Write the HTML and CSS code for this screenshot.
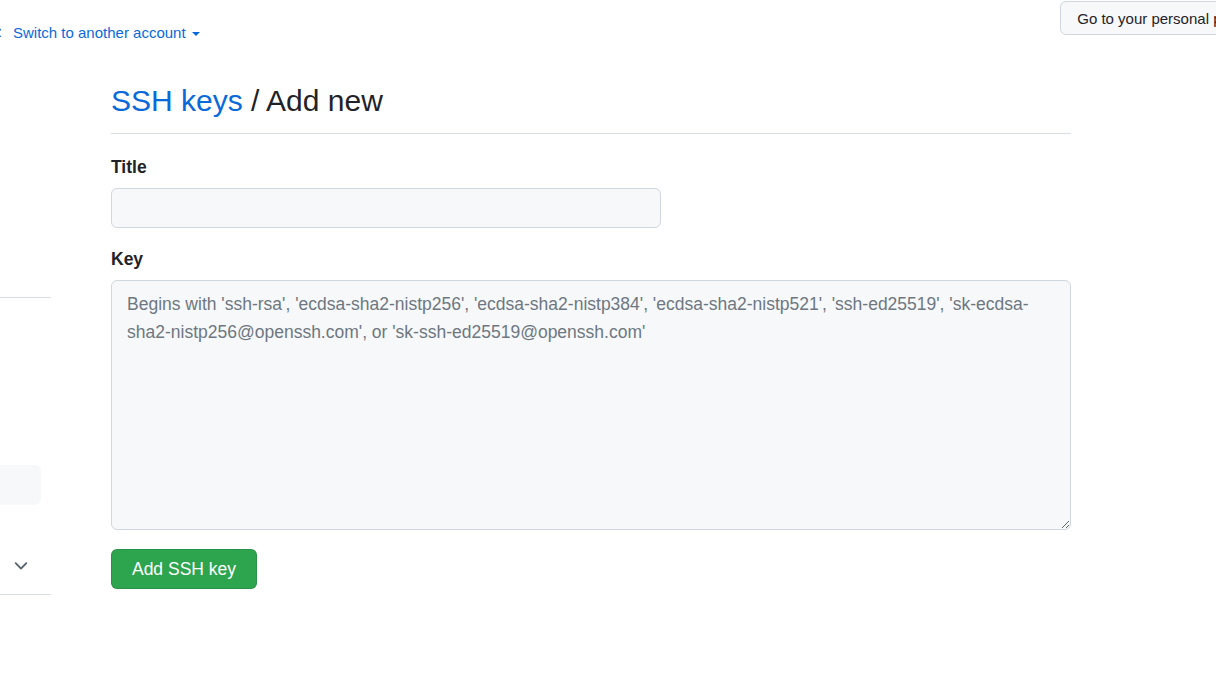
FILE: index.html
```html
<!DOCTYPE html>
<html lang="en">
<head>
<meta charset="utf-8">
<title>SSH keys / Add new</title>
<link rel="stylesheet" href="styles.css">
</head>
<body>
<div class="page">
  <div class="topbar">
    <a class="switch" href="#">
      <svg class="switch-icon" width="16" height="16" viewBox="0 0 16 16" aria-hidden="true"><path fill="#0969da" d="M5.22 14.78a.75.75 0 0 0 1.06-1.06L4.56 12h8.690a.75.75 0 0 0 0-1.5H4.56l1.72-1.720a.75.75 0 0 0-1.06-1.06l-3 3a.75.75 0 0 0 0 1.06l3 3Zm5.56-6.5a.75.75 0 1 1-1.06-1.06l1.72-1.72H2.75a.75.75 0 0 1 0-1.5h8.69L9.72 2.28a.75.75 0 0 1 1.06-1.06l3 3a.75.75 0 0 1 0 1.06l-3 3Z"/></svg>
      <span>Switch to another account</span>
      <span class="caret"></span>
    </a>
    <button class="personal-btn" type="button">Go to your personal profile</button>
  </div>
  <div class="layout">
    <aside class="sidebar">
      <div class="side-rule first"></div>
      <div class="side-item"></div>
      <div class="side-toggle">
        <svg width="20" height="20" viewBox="0 0 16 16" aria-hidden="true"><path fill="#59636e" d="M12.78 5.22a.749.749 0 0 1 0 1.06l-4.25 4.25a.749.749 0 0 1-1.06 0L3.22 6.28a.749.749 0 1 1 1.06-1.06L8 8.939l3.72-3.719a.749.749 0 0 1 1.06 0Z"/></svg>
      </div>
      <div class="side-rule"></div>
    </aside>
    <main class="main">
      <h1 class="subhead"><a href="#">SSH keys</a> / Add new</h1>
      <form class="form">
        <label class="label" for="title">Title</label>
        <input class="input" id="title" type="text">
        <label class="label key-label" for="key">Key</label>
        <textarea class="textarea" id="key" placeholder="Begins with 'ssh-rsa', 'ecdsa-sha2-nistp256', 'ecdsa-sha2-nistp384', 'ecdsa-sha2-nistp521', 'ssh-ed25519', 'sk-ecdsa-sha2-nistp256@openssh.com', or 'sk-ssh-ed25519@openssh.com'"></textarea>
        <button class="btn-primary" type="button">Add SSH key</button>
      </form>
    </main>
  </div>
</div>
</body>
</html>
```

FILE: styles.css
```css
html, body {
  margin: 0;
  padding: 0;
  background: #ffffff;
  overflow: hidden;
}
body {
  font-family: "Liberation Sans", Arial, sans-serif;
  color: #1f2328;
  width: 1216px;
  height: 699px;
}
.page {
  width: 1216px;
  height: 699px;
  overflow: hidden;
}
.topbar {
  display: flex;
  justify-content: space-between;
  align-items: flex-start;
  height: 36px;
}
.switch {
  display: flex;
  align-items: center;
  margin-top: 24px;
  margin-left: -13px;
  color: #0969da;
  text-decoration: none;
  font-size: 15px;
  line-height: 18px;
}
.switch-icon {
  margin-right: 10px;
  flex: none;
}
.caret {
  width: 0;
  height: 0;
  margin-left: 6px;
  margin-top: 2px;
  border-left: 4px solid transparent;
  border-right: 4px solid transparent;
  border-top: 4px solid #0969da;
}
.personal-btn {
  margin-top: 1px;
  margin-right: -55px;
  height: 34px;
  padding: 0 16px;
  font-family: "Liberation Sans", Arial, sans-serif;
  font-size: 15px;
  color: #1f2328;
  background: #f6f8fa;
  border: 1px solid #d0d7de;
  border-radius: 6px;
  white-space: nowrap;
}
.layout {
  display: flex;
  gap: 60px;
}
.sidebar {
  width: 51px;
  flex: none;
  padding-top: 261px;
}
.side-rule {
  height: 1px;
  background: #d8dee4;
}
.side-item {
  margin-top: 167px;
  margin-left: -20px;
  width: 61px;
  height: 40px;
  border-radius: 6px;
  background: #f6f8fa;
}
.side-toggle {
  height: 89px;
  display: flex;
  align-items: flex-start;
  padding-left: 11px;
  padding-top: 51px;
  box-sizing: border-box;
}
.main {
  width: 960px;
  flex: none;
  padding-top: 46px;
}
.subhead {
  margin: 0;
  font-size: 30px;
  font-weight: 400;
  line-height: 38px;
  padding-bottom: 13px;
  border-bottom: 1px solid #d8dee4;
  color: #1f2328;
}
.subhead a {
  color: #0969da;
  text-decoration: none;
}
.form {
  display: flex;
  flex-direction: column;
  align-items: flex-start;
  padding-top: 21px;
}
.label {
  font-size: 17.5px;
  font-weight: 700;
  line-height: 24px;
  margin-bottom: 9px;
}
.key-label {
  margin-top: 19px;
  margin-bottom: 9px;
}
.input {
  width: 550px;
  height: 40px;
  box-sizing: border-box;
  background: #f6f8fa;
  border: 1px solid #d0d7de;
  border-radius: 6px;
  font-family: "Liberation Sans", Arial, sans-serif;
  font-size: 16px;
  padding: 0 12px;
}
.textarea {
  width: 960px;
  height: 250px;
  box-sizing: border-box;
  background: #f6f8fa;
  border: 1px solid #d0d7de;
  border-radius: 6px;
  font-family: "Liberation Sans", Arial, sans-serif;
  font-size: 17.5px;
  line-height: 28px;
  padding: 9px 15px;
  margin: 0;
  color: #1f2328;
}
.textarea::placeholder {
  color: #6e7781;
  opacity: 1;
}
.btn-primary {
  margin-top: 19px;
  height: 40px;
  width: 146px;
  padding: 0;
  background: #2da44e;
  color: #ffffff;
  border: 1px solid rgba(31, 35, 40, 0.15);
  border-radius: 6px;
  font-family: "Liberation Sans", Arial, sans-serif;
  font-size: 17.5px;
}
```
